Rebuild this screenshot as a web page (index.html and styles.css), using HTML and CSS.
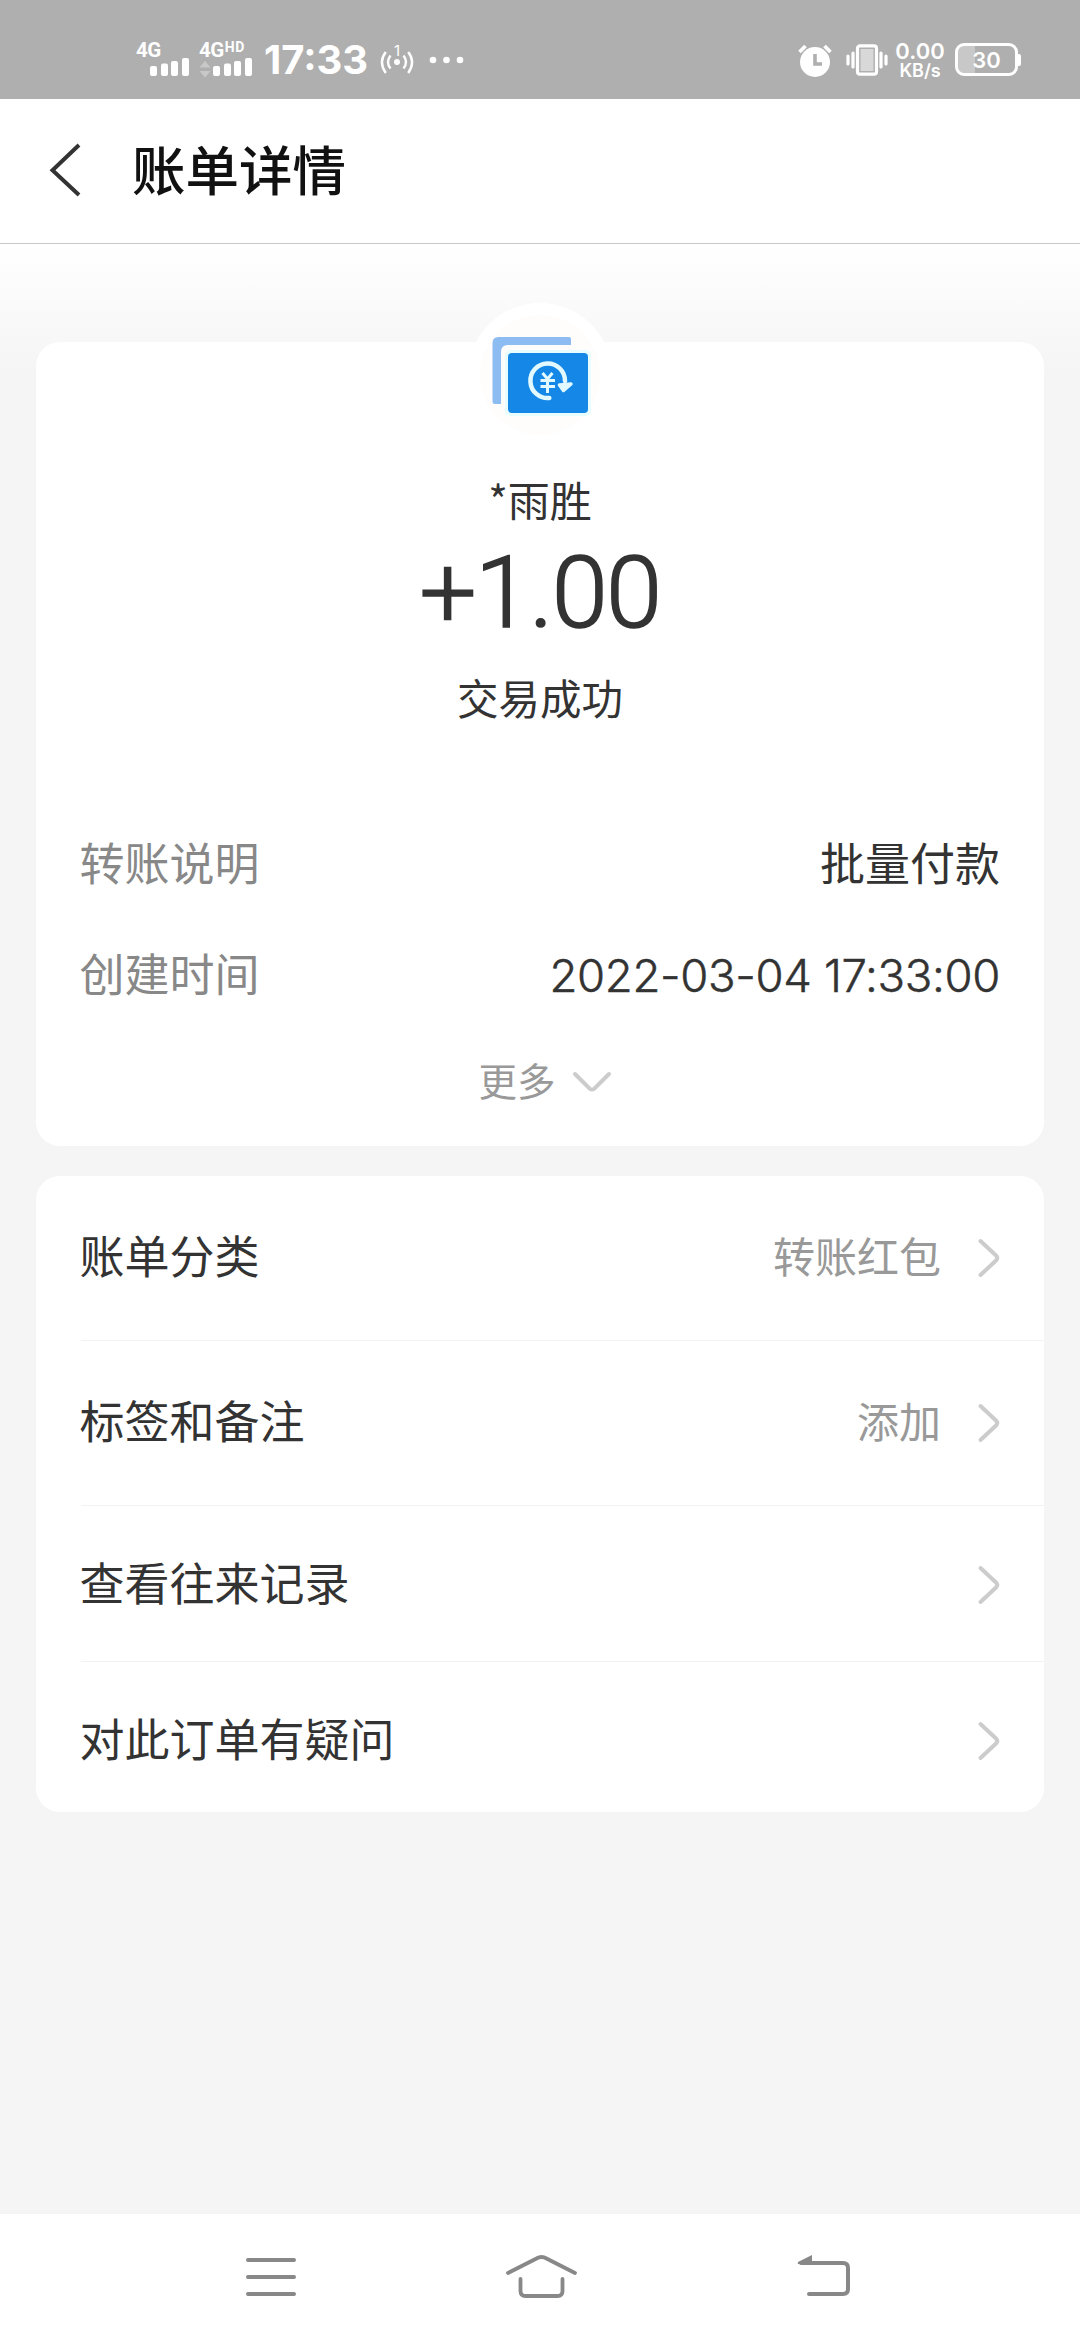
FILE: index.html
```html
<!DOCTYPE html>
<html lang="zh-CN">
<head>
<meta charset="utf-8">
<title>账单详情</title>
<link rel="stylesheet" href="styles.css">
</head>
<body>
<div class="screen">
  <div class="status">
    <div class="signal">
      <span class="net">4G</span>
      <svg class="bars" width="52" height="20" viewBox="0 0 52 20"><g fill="#fff"><rect x="13" y="10" width="7" height="10" rx="2"/><rect x="24" y="7.500" width="7" height="12.500" rx="2"/><rect x="34" y="5" width="7" height="15" rx="2"/><rect x="45" y="2" width="7" height="18" rx="2"/></g></svg>
    </div>
    <div class="signal">
      <span class="net">4G<span class="hd">HD</span></span>
      <svg class="bars" width="52" height="20" viewBox="0 0 52 20"><path d="M-.5 11.500 5 5l5.500 6.500zM-.5 15H10.500L5 21.500z" fill="#c8c8c8"/><g fill="#fff"><rect x="13" y="10" width="7" height="10" rx="2"/><rect x="24" y="7.500" width="7" height="12.500" rx="2"/><rect x="34" y="5" width="7" height="15" rx="2"/><rect x="45" y="2" width="7" height="18" rx="2"/></g></svg>
    </div>
    <span class="clock">17:33</span>
    <div class="hotspot">
      <span class="hotspot-count">1</span>
      <svg width="34" height="24" viewBox="0 0 34 24"><circle cx="17" cy="12" r="3" fill="#fff"/><path d="M10.500 5.500q-5 6.500 0 13M23.500 5.500q5 6.500 0 13M5.800 2Q-2 12 5.800 23M28.200 2Q36 12 28.200 23" fill="none" stroke="#fff" stroke-width="2.400"/></svg>
    </div>
    <svg class="dots" width="36" height="8" viewBox="0 0 36 8"><g fill="#fff"><circle cx="4" cy="4" r="3.300"/><circle cx="17.500" cy="4" r="3.300"/><circle cx="31" cy="4" r="3.300"/></g></svg>
    <svg class="alarm" width="34" height="34" viewBox="0 0 34 34"><circle cx="17" cy="19" r="15" fill="#fff"/><path d="M17 11v10h7" fill="none" stroke="#afafaf" stroke-width="3.600"/><path d="M1.500 9 7.500 3M32.500 9l-6-6" stroke="#fff" stroke-width="3.600"/></svg>
    <svg class="vibrate" width="42" height="32" viewBox="0 0 42 32"><rect x="11.500" y="1.800" width="19" height="28.400" rx="2.500" fill="none" stroke="#fff" stroke-width="3.200"/><rect x="14.500" y="5" width="13" height="22" fill="#d8d8d8"/><path d="M2 12v8M7 9v14M35 9v14M40 12v8" stroke="#fff" stroke-width="3.200" stroke-linecap="round"/></svg>
    <div class="speed"><span class="rate">0.00</span><span class="unit">KB/s</span></div>
    <div class="battery"><span class="level">30</span></div>
    <i class="nub"></i>
  </div>

  <header class="header">
    <svg class="back" width="32" height="52" viewBox="0 0 32 52"><path d="M30 1 3.500 26.200 30 51" fill="none" stroke="#333" stroke-width="4"/></svg>
    <h1 class="title">账单详情</h1>
  </header>

  <main class="main">
    <section class="card summary">
      <div class="avatar">
        <svg width="144" height="144" viewBox="0 0 144 144">
          <circle cx="72" cy="72" r="60" fill="#fffdfc"/>
          <path d="M24.500 99V40q0-6 6-6H101q2 0 2 2v6H40q-7 0-7 7v52h-6q-2.500 0-2.500-2z" fill="#8dbcf3"/>
          <rect x="37" y="47" width="86" height="66" rx="5" fill="#e8fdff"/>
          <rect x="40" y="50" width="80" height="60" rx="4" fill="#1588e7"/>
          <path d="M81.300 95A17.300 17.300 0 1 1 97 78" fill="none" stroke="#e2faff" stroke-width="4.500" stroke-linecap="round"/>
          <path d="m91.500 82 11.500-1-7.500 6.500z" fill="#e2faff" stroke="#e2faff" stroke-width="3.500" stroke-linejoin="round"/>
          <path d="M74.500 70l5 6 5-6M79.500 75v15M72.500 77.500h14.500M72.500 83.500h14.500" fill="none" stroke="#e2faff" stroke-width="3"/>
        </svg>
      </div>
      <p class="payer">*雨胜</p>
      <p class="amount">+1.00</p>
      <p class="state">交易成功</p>
      <dl class="details">
        <div class="detail"><dt>转账说明</dt><dd>批量付款</dd></div>
        <div class="detail"><dt>创建时间</dt><dd class="time">2022-03-04 17:33:00</dd></div>
      </dl>
      <div class="more">
        <span>更多</span>
        <svg class="more-arrow" width="40" height="22" viewBox="0 0 40 22"><path d="m3 3 14.500 14.500q2.500 2 5 0L37 3" fill="none" stroke="#ccc" stroke-width="4" stroke-linecap="round"/></svg>
      </div>
    </section>

    <section class="card menu">
      <div class="row"><span class="label">账单分类</span><span class="value">转账红包</span><svg class="chev" width="22" height="40" viewBox="0 0 22 40"><path d="m2.500 3 15.500 14.500q2.500 2.500 0 5L2.500 37" fill="none" stroke="#ccc" stroke-width="4" stroke-linecap="round"/></svg></div>
      <div class="row"><span class="label">标签和备注</span><span class="value">添加</span><svg class="chev" width="22" height="40" viewBox="0 0 22 40"><path d="m2.500 3 15.500 14.500q2.500 2.500 0 5L2.500 37" fill="none" stroke="#ccc" stroke-width="4" stroke-linecap="round"/></svg></div>
      <div class="row short"><span class="label">查看往来记录</span><svg class="chev" width="22" height="40" viewBox="0 0 22 40"><path d="m2.500 3 15.500 14.500q2.500 2.500 0 5L2.500 37" fill="none" stroke="#ccc" stroke-width="4" stroke-linecap="round"/></svg></div>
      <div class="row last"><span class="label">对此订单有疑问</span><svg class="chev" width="22" height="40" viewBox="0 0 22 40"><path d="m2.500 3 15.500 14.500q2.500 2.500 0 5L2.500 37" fill="none" stroke="#ccc" stroke-width="4" stroke-linecap="round"/></svg></div>
    </section>
  </main>

  <nav class="nav">
    <svg width="80" height="60" viewBox="0 0 80 60"><path d="M17 13h46M17 30h46M17 47h46" stroke="#888" stroke-width="4" stroke-linecap="round"/></svg>
    <svg width="80" height="60" viewBox="0 0 80 60"><path d="M7 26 35.500 11.500q5-3 10 0L74 26M19.500 32v12q0 5 5 5h32q5 0 5-5V32" fill="none" stroke="#888" stroke-width="3.800" stroke-linecap="round"/></svg>
    <svg class="nav-back" width="80" height="60" viewBox="0 0 80 60"><path d="M16 16h42q5 0 5 5v21q0 5-5 5H24" fill="none" stroke="#888" stroke-width="4" stroke-linecap="round"/><path d="M13 15 27 8v9H14q-2 0-1-2z" fill="#888"/></svg>
  </nav>
</div>
</body>
</html>
```
FILE: styles.css
```css
* { box-sizing: border-box; margin: 0; padding: 0; }
body { font-family: "Noto Sans CJK SC", sans-serif; color: #333; }
svg { display: block; flex: none; overflow: visible; }
.screen { width: 1080px; height: 2340px; display: flex; flex-direction: column; background: #f5f5f5; }

.status { flex: none; height: 99px; padding: 42px 59px 0 136px; display: flex; align-items: flex-start; background: #afafaf; color: #fff; font-family: Inter, sans-serif; font-weight: 700; }
.signal { width: 63px; height: 34px; flex: none; display: flex; flex-direction: column; justify-content: space-between; }
.net { height: 14px; display: flex; align-items: flex-start; font-family: Roboto, sans-serif; font-size: 20.500px; line-height: 16px; letter-spacing: -0.500px; white-space: nowrap; }
.hd { margin-left: 1px; font-size: 14px; line-height: 11px; letter-spacing: 0.500px; }
.bars { margin-left: 1px; }
.clock { width: 115px; margin: 3px 0 0 2px; font-size: 40px; line-height: 29px; white-space: nowrap; }
.hotspot { width: 34px; margin: 2px 0 0 1px; display: flex; flex-direction: column; align-items: center; }
.hotspot-count { height: 6px; font-size: 15px; font-weight: 400; line-height: 13px; }
.dots { margin: 14px 0 0 15px; }
.alarm { margin: 1px 0 0 auto; }
.vibrate { margin: 2px 0 0 14px; }
.speed { width: 48px; margin: 1px 0 0 8px; display: flex; flex-direction: column; align-items: center; }
.rate { font-size: 22px; font-weight: 600; line-height: 17px; }
.unit { font-size: 18px; font-weight: 600; line-height: 21px; }
.battery { width: 63px; height: 33px; margin: 1px 0 0 11px; flex: none; border: 3px solid #fff; border-radius: 9px; display: flex; align-items: center; justify-content: center; background: linear-gradient(90deg, #c8c8c8 17px, #afafaf 17px); }
.level { font-size: 22px; font-weight: 600; line-height: 24px; }
.nub { width: 3px; height: 12px; margin-top: 12px; background: #fff; border-radius: 0 2px 2px 0; }

.header { flex: none; height: 145px; padding-left: 49px; display: flex; align-items: center; background: #fff; border-bottom: 1px solid #c8c8c8; }
.back { margin-top: -2px; }
.title { margin: -6px 0 0 51px; font-size: 53.500px; font-weight: 500; line-height: 80px; color: #111; }

.main { flex: 1; padding: 98px 36px 0; display: flex; flex-direction: column; gap: 30px; background: linear-gradient(#fff, #f5f5f5 130px); }
.card { background: #fff; border-radius: 24px; }
.summary { height: 804px; display: flex; flex-direction: column; align-items: center; }
.avatar { width: 144px; height: 144px; margin-top: -39px; border-radius: 50%; background: #fff; }
.payer { margin-top: 22px; font-size: 42px; line-height: 60px; }
.amount { margin-top: 9px; font-family: Roboto, sans-serif; font-size: 101px; font-weight: 300; line-height: 110px; letter-spacing: -1.700px; -webkit-text-stroke: 1.600px #333; }
.state { margin-top: 19px; font-size: 41.500px; line-height: 60px; }
.details { width: 100%; margin-top: 102px; padding: 0 44px 0 43.500px; display: flex; flex-direction: column; gap: 45px; font-size: 45px; line-height: 66px; }
.detail { display: flex; justify-content: space-between; }
.detail dt { color: #888; }
.time { height: 66px; padding-top: 4px; font-family: Inter, sans-serif; font-size: 45.500px; font-weight: 300; line-height: 64px; letter-spacing: -0.350px; -webkit-text-stroke: 0.500px #333; }
.more { margin: 43px 0 0 10px; display: flex; align-items: center; gap: 16px; color: #999; font-size: 38.500px; line-height: 60px; }
.more-arrow { margin-top: 6px; }

.menu { height: 636px; padding-left: 45px; overflow: hidden; }
.row { height: 165px; padding-right: 44px; display: flex; align-items: center; border-bottom: 1px solid #f2f2f2; }
.label { font-size: 45px; line-height: 60px; margin: -6px auto 0 -1.500px; }
.value { font-size: 42px; line-height: 60px; color: #999; margin: -6px 37px 0 0; }
.short { height: 156px; padding-top: 2px; }
.last { height: 156px; padding-top: 2px; border: 0; }

.nav { flex: none; height: 126px; padding-left: 231px; display: flex; align-items: center; gap: 190px; background: #fff; }
.nav-back { margin-left: 14px; }
```
